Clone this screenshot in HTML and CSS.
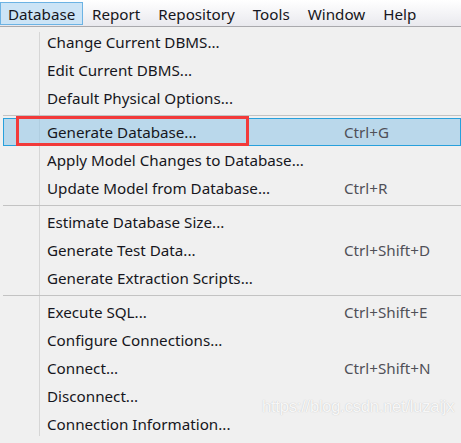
FILE: index.html
```html
<!DOCTYPE html>
<html>
<head>
<meta charset="utf-8">
<link rel="stylesheet" href="styles.css">
</head>
<body>
<div class="app">
  <nav class="menubar">
    <span class="top-item active">Database</span>
    <span class="top-item">Report</span>
    <span class="top-item">Repository</span>
    <span class="top-item">Tools</span>
    <span class="top-item">Window</span>
    <span class="top-item">Help</span>
  </nav>
  <div class="menu">
    <div class="item"><span class="label">Change Current DBMS...</span><span class="key"></span></div>
    <div class="item"><span class="label">Edit Current DBMS...</span><span class="key"></span></div>
    <div class="item"><span class="label">Default Physical Options...</span><span class="key"></span></div>
    <div class="sep"></div>
    <div class="item hover"><span class="label">Generate Database...</span><span class="key">Ctrl+G</span><span class="annot"></span></div>
    <div class="item"><span class="label">Apply Model Changes to Database...</span><span class="key"></span></div>
    <div class="item"><span class="label">Update Model from Database...</span><span class="key">Ctrl+R</span></div>
    <div class="sep"></div>
    <div class="item"><span class="label">Estimate Database Size...</span><span class="key"></span></div>
    <div class="item"><span class="label">Generate Test Data...</span><span class="key">Ctrl+Shift+D</span></div>
    <div class="item"><span class="label">Generate Extraction Scripts...</span><span class="key"></span></div>
    <div class="sep"></div>
    <div class="item"><span class="label">Execute SQL...</span><span class="key">Ctrl+Shift+E</span></div>
    <div class="item"><span class="label">Configure Connections...</span><span class="key"></span></div>
    <div class="item"><span class="label">Connect...</span><span class="key">Ctrl+Shift+N</span></div>
    <div class="item"><span class="label">Disconnect...</span><span class="key"></span></div>
    <div class="item"><span class="label">Connection Information...</span><span class="key"></span></div>
    <span class="watermark">https://blog.csdn.net/luzaijx</span>
  </div>
</div>
</body>
</html>
```
FILE: styles.css
```css
html, body {
  margin: 0;
  padding: 0;
  background: #f0f0f0;
}
.app {
  width: 461px;
  height: 443px;
  overflow: hidden;
  font-family: "Noto Sans", "Open Sans", sans-serif;
  font-size: 15.2px;
  color: #161620;
}
.menubar {
  display: flex;
  align-items: center;
  height: 27px;
  box-sizing: border-box;
  border-bottom: 1px solid #a9a9ad;
  background: linear-gradient(#ffffff, #e9e9ee);
}
.top-item {
  box-sizing: border-box;
  height: 23px;
  display: flex;
  align-items: center;
  padding: 1px 8px 0;
  border: 1px solid transparent;
}
.top-item.active {
  background: #cce4f6;
  border-color: #6cb3e4;
  padding-left: 7px;
  width: 83px;
}
.menu {
  position: relative;
  padding-top: 1px;
  height: 415px;
  box-sizing: border-box;
  background:
    linear-gradient(#d6d6d6, #d6d6d6) no-repeat 39px 5px / 1px 404px,
    #f0f0f0;
}
.item {
  position: relative;
  display: grid;
  grid-template-columns: 297px auto;
  align-items: center;
  height: 28px;
  box-sizing: border-box;
  margin-left: 3px;
  width: 458px;
  padding-left: 43px;
  border: 1px solid transparent;
  white-space: nowrap;
}
.item.hover {
  background: rgba(150, 200, 232, 0.6);
  border-color: #28a0dc;
}
.key {
  color: #505058;
}
.sep {
  height: 1px;
  margin: 3px 0 2px 3px;
  background: #c3c3c3;
}
.annot {
  position: absolute;
  left: 12px;
  top: -3px;
  width: 233px;
  height: 30px;
  box-sizing: border-box;
  border: 3px solid #f23a3a;
}
.watermark {
  position: absolute;
  left: 262px;
  top: 370px;
  font-family: "Liberation Sans", Arial, sans-serif;
  font-size: 16.5px;
  color: rgba(255, 255, 255, 0.9);
  text-shadow: 0 0 1px rgba(120, 120, 120, 0.45);
  letter-spacing: -0.2px;
}
```
